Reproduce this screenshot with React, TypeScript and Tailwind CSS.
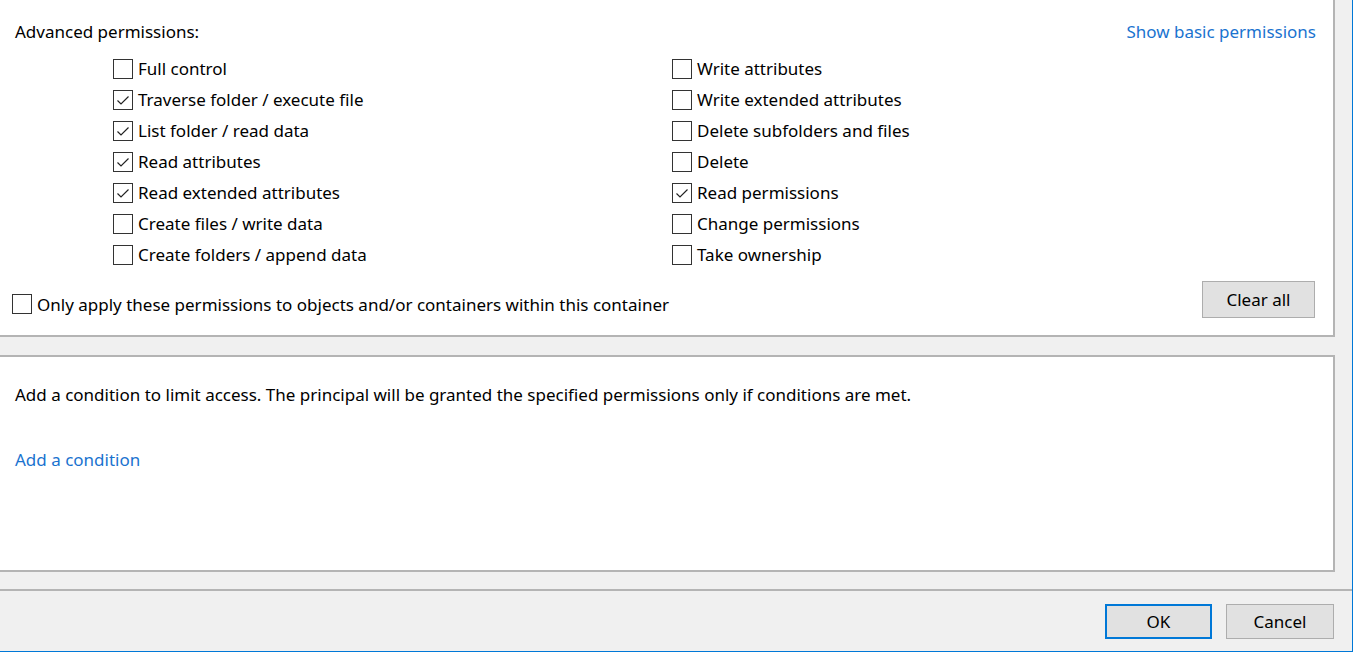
import React from 'react';

const font = { fontFamily: '"Noto Sans", "Open Sans", Arial, sans-serif' };

const Check: React.FC<{ checked?: boolean }> = ({ checked }) => (
  <div className="w-[20px] h-[20px] border border-[#333333] bg-white flex items-center justify-center shrink-0">
    {checked && (
      <svg width="18" height="18" viewBox="0 0 18 18" fill="none">
        <path d="M3.5 9.5 L7 13 L14.5 5.5" stroke="#222222" strokeWidth="1.2" />
      </svg>
    )}
  </div>
);

const Item: React.FC<{ label: string; checked?: boolean }> = ({ label, checked }) => (
  <div className="flex items-center gap-[5px] h-[31px]">
    <Check checked={checked} />
    <span className="text-[17px] text-black leading-none">{label}</span>
  </div>
);

const left = [
  ['Full control', false],
  ['Traverse folder / execute file', true],
  ['List folder / read data', true],
  ['Read attributes', true],
  ['Read extended attributes', true],
  ['Create files / write data', false],
  ['Create folders / append data', false],
] as const;

const right = [
  ['Write attributes', false],
  ['Write extended attributes', false],
  ['Delete subfolders and files', false],
  ['Delete', false],
  ['Read permissions', true],
  ['Change permissions', false],
  ['Take ownership', false],
] as const;

const App: React.FC = () => {
  return (
    <div className="w-[1357px] h-[652px] flex bg-white overflow-hidden" style={font}>
      <div className="w-[1353px] h-[652px] flex flex-col bg-[#f0f0f0] border-r border-b border-[#0078d7]">
        {/* permissions panel */}
        <div className="w-[1335px] h-[337px] bg-white border-r-2 border-b-2 border-[#b4b4b4] flex flex-col">
          <div className="flex justify-between items-center pt-[20px] pl-[15px] pr-[17px] h-[44px]">
            <span className="text-[17px] text-black">Advanced permissions:</span>
            <span className="text-[17px] text-[#1a73cf]">Show basic permissions</span>
          </div>
          <div className="flex mt-[9px] pl-[113px]">
            <div className="w-[559px] flex flex-col">
              {left.map(([l, c]) => (
                <Item key={l} label={l} checked={c} />
              ))}
            </div>
            <div className="flex flex-col">
              {right.map(([l, c]) => (
                <Item key={l} label={l} checked={c} />
              ))}
            </div>
          </div>
          <div className="flex justify-between items-end mt-[11px] pl-[12px] pr-[18px]">
            <div className="flex items-center gap-[5px] mb-[1px]">
              <Check />
              <span className="text-[17px] text-black">
                Only apply these permissions to objects and/or containers within this container
              </span>
            </div>
            <button className="w-[113px] h-[37px] bg-[#e1e1e1] border border-[#adadad] text-[17px] text-black">
              Clear all
            </button>
          </div>
        </div>

        {/* condition panel */}
        <div className="w-[1335px] h-[217px] mt-[18px] bg-white border-t-2 border-r-2 border-b-2 border-[#b4b4b4] pl-[15px]">
          <p className="text-[17px] text-black mt-[26px] leading-[24px]">
            Add a condition to limit access. The principal will be granted the specified permissions only if conditions
            are met.
          </p>
          <p className="text-[17px] text-[#1a73cf] mt-[41px] leading-[24px]">Add a condition</p>
        </div>

        {/* footer */}
        <div className="flex-1 mt-[17px] border-t-2 border-[#b4b4b4] flex justify-end items-start pt-[13px] pr-[18px] gap-[14px]">
          <button className="w-[107px] h-[35px] bg-[#e1e1e1] border-2 border-[#0078d7] text-[17px] text-black">
            OK
          </button>
          <button className="w-[108px] h-[35px] bg-[#e1e1e1] border border-[#adadad] text-[17px] text-black">
            Cancel
          </button>
        </div>
      </div>
    </div>
  );
};

export default App;
